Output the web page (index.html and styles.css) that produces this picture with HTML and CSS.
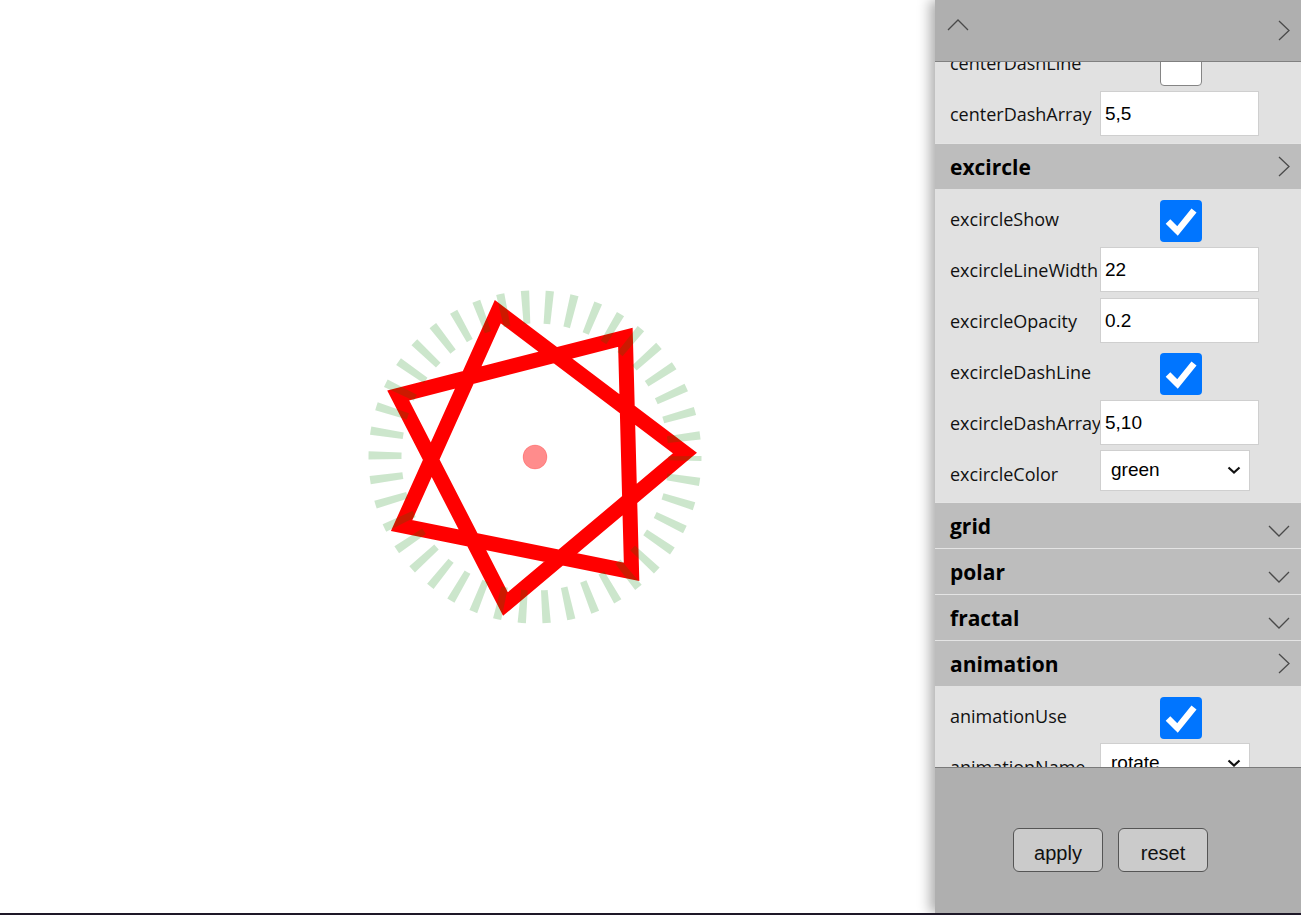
FILE: index.html
```html
<!DOCTYPE html>
<html>
<head>
<meta charset="utf-8">
<link rel="stylesheet" href="styles.css">
</head>
<body>
<div class="stage">
  <svg class="canvas" width="1301" height="913" viewBox="0 0 1301 913">
    <path class="star" d="M684.95 453.07 L505.45 604.06 L398.19 395.48 L625.39 337.30 L631.57 571.77 L401.60 525.60 L497.80 311.68 Z"/>
    <circle class="excircle" cx="535" cy="457" r="150"/>
    <circle class="center-dot" cx="535" cy="457" r="12"/>
  </svg>

  <aside class="panel">
    <div class="panel-head">
      <svg class="icon" width="22" height="12" viewBox="0 0 22 12"><polyline points="1,11 11,1 21,11"/></svg>
      <svg class="icon" width="13" height="21" viewBox="0 0 13 21"><polyline points="1,1 11,10.5 1,20"/></svg>
    </div>

    <div class="panel-body">
      <div class="scroll">
        <div class="section-content">
          <div class="row"><span class="label">centerDashLine</span><span class="check off"></span></div>
          <div class="row"><span class="label">centerDashArray</span><span class="field">5,5</span></div>
        </div>

        <div class="section-head"><span>excircle</span>
          <svg class="icon" width="13" height="21" viewBox="0 0 13 21"><polyline points="1,1 11,10.5 1,20"/></svg>
        </div>
        <div class="section-content short">
          <div class="row"><span class="label">excircleShow</span><span class="check on"><svg width="42" height="42" viewBox="0 0 42 42"><path d="M8 21.5 L17.5 31 L34 10.5"/></svg></span></div>
          <div class="row"><span class="label">excircleLineWidth</span><span class="field">22</span></div>
          <div class="row"><span class="label">excircleOpacity</span><span class="field">0.2</span></div>
          <div class="row"><span class="label">excircleDashLine</span><span class="check on"><svg width="42" height="42" viewBox="0 0 42 42"><path d="M8 21.5 L17.5 31 L34 10.5"/></svg></span></div>
          <div class="row"><span class="label">excircleDashArray</span><span class="field">5,10</span></div>
          <div class="row"><span class="label">excircleColor</span><span class="select"><span>green</span><svg width="14" height="8" viewBox="0 0 14 8"><polyline points="1.5,1.5 7,6.5 12.5,1.5"/></svg></span></div>
        </div>

        <div class="section-head"><span>grid</span>
          <svg class="icon down" width="22" height="12" viewBox="0 0 22 12"><polyline points="1,1 11,11 21,1"/></svg>
        </div>
        <div class="section-head"><span>polar</span>
          <svg class="icon down" width="22" height="12" viewBox="0 0 22 12"><polyline points="1,1 11,11 21,1"/></svg>
        </div>
        <div class="section-head"><span>fractal</span>
          <svg class="icon down" width="22" height="12" viewBox="0 0 22 12"><polyline points="1,1 11,11 21,1"/></svg>
        </div>
        <div class="section-head"><span>animation</span>
          <svg class="icon" width="13" height="21" viewBox="0 0 13 21"><polyline points="1,1 11,10.5 1,20"/></svg>
        </div>
        <div class="section-content">
          <div class="row"><span class="label">animationUse</span><span class="check on"><svg width="42" height="42" viewBox="0 0 42 42"><path d="M8 21.5 L17.5 31 L34 10.5"/></svg></span></div>
          <div class="row"><span class="label">animationName</span><span class="select"><span>rotate</span><svg width="14" height="8" viewBox="0 0 14 8"><polyline points="1.5,1.5 7,6.5 12.5,1.5"/></svg></span></div>
        </div>
      </div>
    </div>

    <div class="panel-foot">
      <button class="btn">apply</button>
      <button class="btn">reset</button>
    </div>
  </aside>
</div>
</body>
</html>
```

FILE: styles.css
```css
html, body {
  margin: 0;
  padding: 0;
  background: #fff;
}

.stage {
  position: relative;
  height: 913px;
  border-bottom: 2px solid #1e1828;
  overflow: hidden;
  background: #fff;
}

.canvas {
  display: block;
}

.star {
  fill: none;
  stroke: #ff0000;
  stroke-width: 15;
  stroke-linejoin: miter;
  stroke-miterlimit: 10;
}

.excircle {
  fill: none;
  stroke: rgba(0, 128, 0, 0.2);
  stroke-width: 33;
  stroke-dasharray: 7.5 15;
  stroke-dashoffset: 3.75;
}

.center-dot {
  fill: rgba(255, 0, 0, 0.45);
  stroke: rgba(255, 0, 0, 0.2);
  stroke-width: 1;
}

.panel {
  position: absolute;
  top: 0;
  right: 0;
  bottom: 0;
  width: 366px;
  display: flex;
  flex-direction: column;
  background: #e1e1e1;
  box-shadow: -5px 0 12px rgba(0, 0, 0, 0.32);
  font-family: "Open Sans", "Noto Sans", sans-serif;
  color: #111;
}

.icon polyline {
  fill: none;
  stroke: #4a4a4a;
  stroke-width: 1.3;
}

.panel-head {
  flex: none;
  height: 62px;
  box-sizing: border-box;
  background: #afafaf;
  border-bottom: 1px solid #808080;
  display: flex;
  justify-content: space-between;
  align-items: flex-start;
  padding: 19px 10px 0 12px;
}

.panel-head .icon:last-child {
  margin-top: 1px;
}

.panel-body {
  flex: 1;
  overflow: hidden;
  background: #e1e1e1;
}

.scroll {
  margin-top: -29px;
}

.section-content {
  padding: 4px 0;
}

.section-content.short {
  padding-bottom: 3px;
}

.row {
  height: 51px;
  display: flex;
  align-items: center;
  padding-left: 15px;
}

.label {
  flex: none;
  width: 150px;
  font-size: 18px;
  white-space: nowrap;
  line-height: 24px;
}

.field {
  flex: none;
  width: 159px;
  height: 45px;
  box-sizing: border-box;
  background: #fff;
  border: 1px solid #cfcfcf;
  padding-left: 4px;
  display: flex;
  align-items: center;
  font-family: "Liberation Sans", Arial, sans-serif;
  font-size: 19px;
  color: #000;
}

.check {
  flex: none;
  width: 42px;
  height: 42px;
  box-sizing: border-box;
  border-radius: 4px;
  margin-left: 60px;
  margin-top: 5px;
}

.check.on {
  background: #0075ff;
}

.check.off {
  background: #fff;
  border: 1px solid #858585;
}

.check svg {
  display: block;
}

.check path {
  fill: none;
  stroke: #fff;
  stroke-width: 6.5;
  stroke-linejoin: miter;
}

.select {
  flex: none;
  width: 150px;
  height: 41px;
  box-sizing: border-box;
  background: #fff;
  border: 1px solid #cfcfcf;
  display: flex;
  align-items: center;
  justify-content: space-between;
  padding: 0 8px 2px 10px;
  margin-bottom: 6px;
  font-family: "Liberation Sans", Arial, sans-serif;
  font-size: 19px;
  color: #000;
}

.select polyline {
  fill: none;
  stroke: #111;
  stroke-width: 2.2;
}

.section-head {
  height: 46px;
  box-sizing: border-box;
  border-top: 1px solid #e4e4e4;
  background: #bdbdbd;
  display: flex;
  align-items: center;
  justify-content: space-between;
  padding: 0 10px 0 15px;
  font-size: 21px;
  font-weight: 700;
  color: #000;
}

.section-head .icon.down {
  margin-top: 10px;
  margin-right: 1px;
}

.panel-foot {
  flex: none;
  height: 146px;
  box-sizing: border-box;
  background: #afafaf;
  border-top: 1px solid #7a7a7a;
  display: flex;
  justify-content: center;
  align-items: flex-start;
  gap: 15px;
  padding: 60px 15px 0 0;
}

.btn {
  width: 90px;
  height: 44px;
  background: #cbcbcb;
  border: 1px solid #555;
  border-radius: 6px;
  font-family: "Liberation Sans", Arial, sans-serif;
  font-size: 20px;
  color: #111;
  padding: 7px 0 0;
}
```
